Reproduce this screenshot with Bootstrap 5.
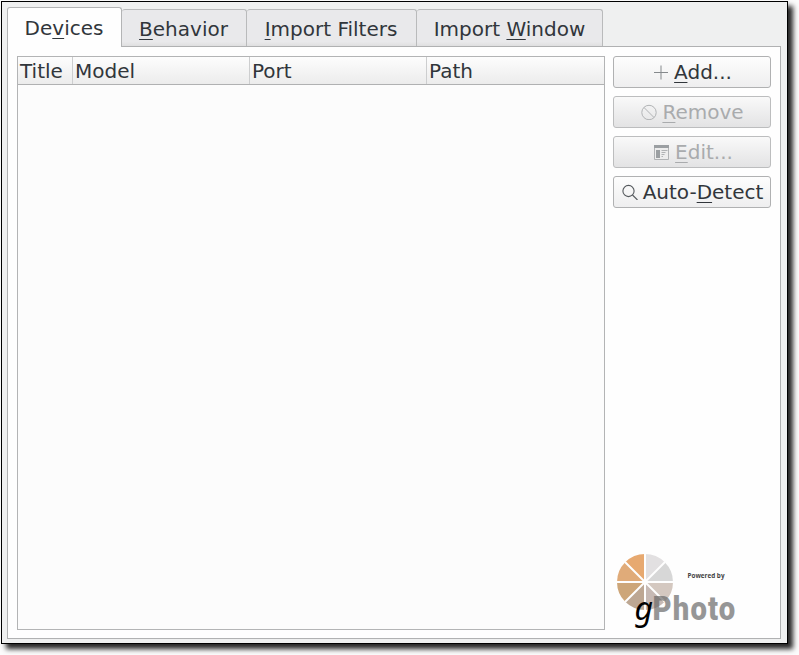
<!DOCTYPE html>
<html lang="en">
<head>
<meta charset="utf-8">
<title>Import devices</title>
<link href="https://cdn.jsdelivr.net/npm/bootstrap@5.3.0/dist/css/bootstrap.min.css" rel="stylesheet">
<style>
html{height:100%}
body{display:flow-root;height:100%;background:#fcfcfc;color:#31363b;font:20px/24px "DejaVu Sans",sans-serif}
u{text-decoration:underline;text-decoration-thickness:1px;text-underline-offset:3px;text-decoration-skip-ink:none}
.window{width:787px;height:643px;margin:1px;border:1px solid #000;background:#eff0f0;padding:5px 6px 4px 5px;
 box-shadow:5px 5px 5px rgba(0,0,0,.85)}
.tabs{--bs-nav-tabs-border-width:0;height:39px;border:0}
.tabs .nav-link{height:38px;margin:2px 0 0;padding:7px 1px 0 0;border:1px solid #b9babb;border-left:0;border-bottom-color:#b0b1b2;border-radius:3px 3px 0 0;
 background:linear-gradient(#e9e9eb 88%,#dfdfe0);color:#31363b;line-height:24px;text-align:center}
.tabs .nav-link.active{height:40px;margin:0;padding-top:8px;border:1px solid #b3b4b5;border-bottom:0;background:#fefefe;color:#31363b;position:relative;z-index:1}
.w1{width:115px}.w2{width:125px}.w3{width:170px}.w4{width:186px}
.tabs .w4{padding-right:0}
.pane{border:1px solid #b0b1b2;background:#fefefe;padding:9px 9px 8px;gap:8px}
.device-list{width:588px;border:1px solid #b3b4b5;background:#fcfcfc}
.head{height:28px;border-bottom:1px solid #b0b1b2;background:linear-gradient(#fdfdfd,#ececec)}
.head>div{border-right:1px solid #cdcecf;padding:2px 0 0 2px}
.head>div:last-child{border:0}
.c1{width:55px}.c2,.c3{width:177px}
.side{width:158px}
.side .btn{height:32px;padding:0 0 0 1px;border:1px solid #b0b1b2;border-radius:3px;background:linear-gradient(#fdfdfd,#eeeeef);color:#31363b;font:inherit;line-height:24px;gap:5px;opacity:1}
.side .btn:disabled{background:linear-gradient(#f9f9f9,#e3e3e4);border-color:#bcbdbe;color:#a9abad}
.side .btn.edit{padding-left:3px}
.side .btn svg{width:16px;height:16px;flex:none}
.side .stack{gap:8px}
.brand{margin:0 0 0 1px}
</style>
</head>
<body>
<main class="window d-flex flex-column">
 <nav class="nav nav-tabs tabs flex-nowrap">
  <a class="nav-link active w1">De<u>v</u>ices</a>
  <a class="nav-link w2"><u>B</u>ehavior</a>
  <a class="nav-link w3"><u>I</u>mport Filters</a>
  <a class="nav-link w4">Import <u>W</u>indow</a>
 </nav>
 <section class="pane d-flex flex-grow-1">
  <div class="device-list">
   <div class="head d-flex"><div class="c1">Title</div><div class="c2">Model</div><div class="c3">Port</div><div>Path</div></div>
  </div>
  <aside class="side d-flex flex-column justify-content-between">
   <div class="stack d-flex flex-column">
    <button class="btn d-flex align-items-center justify-content-center"><svg viewBox="0 0 16 16"><path d="M8 1.500v14M1 8.500h14" stroke="#85898c" fill="none"/></svg><span><u>A</u>dd...</span></button>
    <button class="btn d-flex align-items-center justify-content-center" disabled><svg viewBox="0 0 16 16"><g stroke="#b1b3b5" fill="none"><circle cx="8" cy="8.500" r="7.200"/><path d="M3 3.500l10 10"/></g></svg><span><u>R</u>emove</span></button>
    <button class="btn edit d-flex align-items-center justify-content-center" disabled><svg viewBox="0 0 16 16"><path d="M.5 1v14.500h14V1" fill="#ededed" stroke="#b1b3b5"/><path d="M0 1h15v3H0zM2 6h4v8H2z" fill="#9b9fa2"/><path d="M7.500 6.500h6M7.500 8.500h4M7.500 10.500h3M7.500 12.500h1.500" stroke="#b1b3b5"/></svg><span><u>E</u>dit...</span></button>
    <button class="btn d-flex align-items-center justify-content-center"><svg viewBox="0 0 16 16"><g stroke="#55595d" fill="none" stroke-width="1.100"><circle cx="6.500" cy="7" r="5.600"/><path d="M10.500 11l5 5"/></g></svg><span>Auto-<u>D</u>etect</span></button>
   </div>
   <svg class="brand" width="130" height="80" viewBox="614 550 130 80">
    <g>
     <path d="M645 582V554A28 28 0 0 1 664.800 562.200Z" fill="#e2e0e1"/>
     <path d="M645 582L664.800 562.200A28 28 0 0 1 673 582Z" fill="#d7d7d7"/>
     <path d="M645 582H673A28 28 0 0 1 664.800 601.800Z" fill="#d4c8c0"/>
     <path d="M645 582L664.800 601.800A28 28 0 0 1 645 610Z" fill="#c6b9b4"/>
     <path d="M645 582V610A28 28 0 0 1 625.200 601.800Z" fill="#bda793"/>
     <path d="M645 582L625.200 601.800A28 28 0 0 1 617 582Z" fill="#cda679"/>
     <path d="M645 582H617A28 28 0 0 1 625.200 562.200Z" fill="#e0ab79"/>
     <path d="M645 582L625.200 562.200A28 28 0 0 1 645 554Z" fill="#e7a970"/>
     <path d="M645 553v58M616 582h58M625 562l40 40M665 562l-40 40" stroke="#fefefe" stroke-width="2"/>
    </g>
    <text x="687.500" y="578" font-family="'Open Sans','DejaVu Sans',sans-serif" font-size="7" font-weight="bold" fill="#444" textLength="37" lengthAdjust="spacingAndGlyphs">Powered by</text>
    <text transform="translate(652.500 620) scale(.9 1)" font-family="Roboto,sans-serif" font-size="32.500" font-weight="900" fill="#666" opacity=".68" textLength="92">Photo</text>
    <text x="634.500" y="619.500" font-family="'Noto Sans',sans-serif" font-style="italic" font-size="32" fill="#000">g</text>
   </svg>
  </aside>
 </section>
</main>
<script src="https://cdn.jsdelivr.net/npm/bootstrap@5.3.0/dist/js/bootstrap.bundle.min.js"></script>
</body>
</html>
